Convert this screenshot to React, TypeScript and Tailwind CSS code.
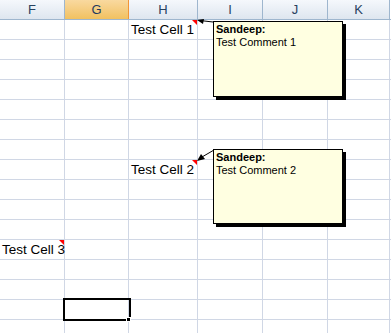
const cols = [
  { name: "F", w: "w-[65px]" },
  { name: "G", w: "w-[64px]" },
  { name: "H", w: "w-[69px]" },
  { name: "I", w: "w-[65px]" },
  { name: "J", w: "w-[65px]" },
  { name: "K", w: "w-[62px]" },
];

// cells holding a value (and a comment marker)
const cellText: Record<string, string> = {
  "1-H": "Test Cell 1",
  "8-H": "Test Cell 2",
  "12-F": "Test Cell 3",
};

const selected = "15-G";
const rows = Array.from({ length: 16 }, (_, i) => i + 1);

function CommentBox({ top, height, text }: { top: string; height: string; text: string }) {
  return (
    <div
      className={`absolute left-[213px] ${top} ${height} w-[130px] border border-black bg-[#ffffe1] px-[2px] pt-[1px] text-[11px] leading-[13px] text-black shadow-[3px_3px_0_#000]`}
    >
      <div className="font-bold">Sandeep:</div>
      <div>{text}</div>
    </div>
  );
}

export default function App() {
  return (
    <div
      className="relative h-[333px] w-[391px] overflow-hidden bg-white"
      style={{ fontFamily: '"Liberation Sans", Arial, sans-serif' }}
    >
      <div className="flex h-[20px] border-b border-[#9eb6ce]">
        {cols.map((c) => (
          <div
            key={c.name}
            className={`${c.w} flex items-center justify-center border-r text-[13px] ${
              c.name === "G"
                ? "border-[#f29536] bg-gradient-to-b from-[#f9d99f] to-[#f1c15f] text-[#1f3a5f]"
                : "border-[#9eb6ce] bg-gradient-to-b from-[#f5f8fc] to-[#dee6ef] text-[#27415f]"
            }`}
          >
            {c.name}
          </div>
        ))}
      </div>
      {rows.map((r) => (
        <div key={r} className="flex h-[20px] border-b border-[#d0d7e5]">
          {cols.map((c) => {
            const key = `${r}-${c.name}`;
            const text = cellText[key];
            const isSel = key === selected;
            return (
              <div
                key={c.name}
                className={`${c.w} relative flex items-end whitespace-nowrap border-r border-[#d0d7e5] pb-[1px] pl-[2px] text-[13.5px] leading-[16px] text-black ${
                  isSel ? "z-10 outline-2 outline-black" : ""
                }`}
              >
                {text}
                {text && (
                  <span className="absolute right-0 top-0 h-0 w-0 border-l-[5px] border-t-[5px] border-l-transparent border-t-[#ff0000]" />
                )}
                {isSel && (
                  <span className="absolute -bottom-[3px] -right-[3px] h-[5px] w-[5px] border border-white bg-black" />
                )}
              </div>
            );
          })}
        </div>
      ))}

      <svg className="absolute left-0 top-0" width="391" height="333">
        <line x1="213" y1="22" x2="200" y2="20.5" stroke="#000" strokeWidth="1" />
        <polygon points="197,20 204,19 203,24" fill="#000" />
        <line x1="214" y1="150" x2="202" y2="157" stroke="#000" strokeWidth="1" />
        <polygon points="197,161 201,154 205,159" fill="#000" />
      </svg>

      <CommentBox top="top-[21px]" height="h-[76px]" text="Test Comment 1" />
      <CommentBox top="top-[149px]" height="h-[75px]" text="Test Comment 2" />
    </div>
  );
}
